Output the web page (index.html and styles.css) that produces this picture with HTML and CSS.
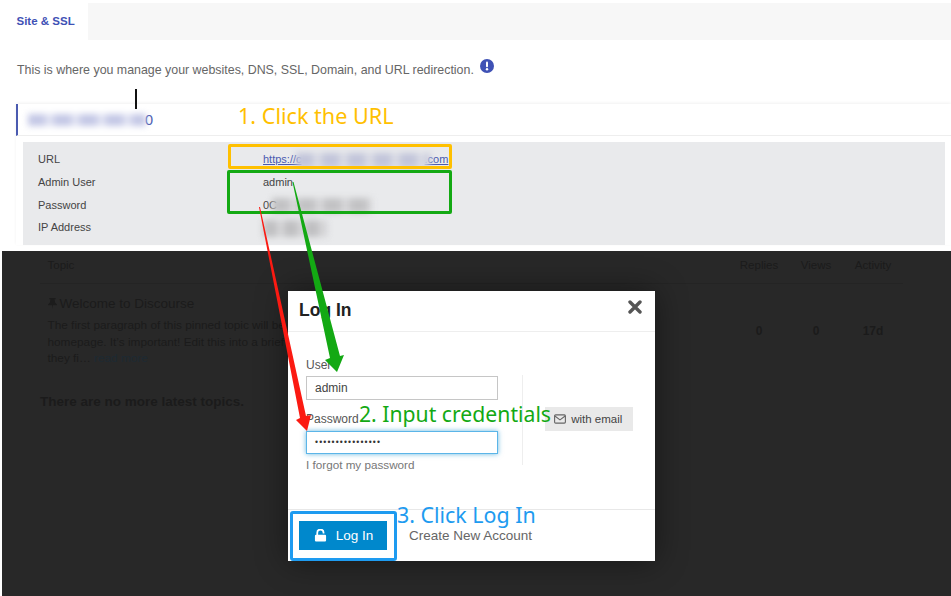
FILE: index.html
```html
<!DOCTYPE html>
<html lang="en">
<head>
<meta charset="utf-8">
<title>Site &amp; SSL</title>
<link rel="stylesheet" href="styles.css">
</head>
<body>
<div class="shot">
  <section class="top">
    <div class="tabs"><div class="tab">Site &amp; SSL</div></div>
    <p class="intro">This is where you manage your websites, DNS, SSL, Domain, and URL redirection.
      <svg class="info" viewBox="0 0 14 14" width="14" height="14"><circle cx="7" cy="7" r="7" fill="#3f51b5"/><rect x="6" y="2.6" width="2" height="5.6" rx="1" fill="#fff"/><circle cx="7" cy="10.3" r="1.2" fill="#fff"/></svg>
    </p>
    <div class="card">
      <div class="card-head"><span class="blur blur-title"></span><span class="site-end">0</span></div>
      <div class="details">
        <div class="row"><span>URL</span><span><a class="link">https://c<span class="blur blur-url"></span>.com</a></span></div>
        <div class="row"><span>Admin User</span><span>admin</span></div>
        <div class="row"><span>Password</span><span>0C<span class="blur blur-pass"></span></span></div>
        <div class="row"><span>IP Address</span><span><span class="blur blur-ip"></span></span></div>
      </div>
    </div>
  </section>

  <section class="dark">
    <div class="topics-head"><span class="col-topic">Topic</span><span class="col-num">Replies</span><span class="col-num">Views</span><span class="col-num">Activity</span></div>
    <div class="topic-row">
      <div class="col-topic topic-main">
        <div class="topic-title"><svg class="pin" viewBox="0 0 10 12" width="9" height="11"><path d="M1.500 0h7v1.200H7.300L7.800 5 10 7v1H5.500L5 12l-.5-4H0V7l2.200-2 .5-3.800H1.500z" fill="#1c1c1c"/></svg>Welcome to Discourse</div>
        <p class="excerpt">The first paragraph of this pinned topic will be visible as a welcome message to new visitors on your<br>homepage. It’s important! Edit this into a brief description of your community: who it’s for, what<br>they fi… <span class="more">read more</span></p>
      </div>
      <span class="col-num strong">0</span><span class="col-num strong">0</span><span class="col-num strong">17d</span>
    </div>
    <p class="no-more">There are no more latest topics.</p>
  </section>

  <div class="modal">
    <header class="modal-head"><h2>Log In</h2>
      <svg class="close" viewBox="0 0 14 14" width="14" height="14"><path d="M2 2l10 10M12 2L2 12" stroke="#555" stroke-width="3.400" stroke-linecap="round" fill="none"/></svg>
    </header>
    <div class="modal-body">
      <div class="form">
        <label class="lbl lbl-user">User</label>
        <div class="input">admin</div>
        <label class="lbl lbl-pass">Password</label>
        <div class="input focus">••••••••••••••••</div>
        <div class="forgot">I forgot my password</div>
      </div>
      <div class="alt">
        <div class="email-btn">
          <svg viewBox="0 0 14 11" width="12" height="10"><rect x=".7" y=".7" width="12.600" height="9.600" rx="1.200" fill="none" stroke="#666" stroke-width="1.300"/><path d="M1 2l6 4.500L13 2" fill="none" stroke="#666" stroke-width="1.300"/></svg>
          with email</div>
      </div>
    </div>
    <footer class="modal-foot">
      <div class="login-btn">
        <svg viewBox="0 0 14 14" width="13" height="13"><path d="M3.500 6.500V4a3.400 3.400 0 0 1 6.800 0v.8" fill="none" stroke="#fff" stroke-width="1.900"/><rect x="1" y="6.300" width="12" height="7.200" rx="1.200" fill="#fff"/></svg>
        Log In</div>
      <span class="create">Create New Account</span>
    </footer>
  </div>

  <span class="tick"></span>
  <span class="box box-yellow"></span>
  <span class="box box-green"></span>
  <span class="box box-blue"></span>
  <svg class="arrows" viewBox="0 0 951 596" width="951" height="596">
    <polygon fill="#13a913" points="292.500,182 293.500,182 340,356 344,355 337,372 325,360 330,358"/>
    <polygon fill="#fb1a12" points="259,207 260,207 306,416 311,415 307,431 296,420 300,418"/>
  </svg>
  <span class="note note-1">1. Click the URL</span>
  <span class="note note-2">2. Input credentials</span>
  <span class="note note-3">3. Click Log In</span>
</div>
</body>
</html>
```
FILE: styles.css
```css
* { box-sizing: border-box; }
html, body { margin: 0; padding: 0; background: #fff; }
body { font-family: "Liberation Sans", Arial, sans-serif; overflow: hidden; }
.shot { position: relative; width: 951px; height: 596px; display: flex; flex-direction: column; overflow: hidden; }

.top { height: 251px; padding-top: 3px; background: #fff; flex: none; }
.tabs { height: 37px; margin-left: 5px; background: #f7f7f7; }
.tab { width: 83px; height: 37px; background: #fff; color: #3f51b5; font-size: 11.500px; font-weight: bold; line-height: 36px; padding-left: 11.500px; }
.intro { margin: 0; height: 64px; padding: 19px 0 0 17px; font-size: 12.400px; line-height: 16px; color: #666; white-space: nowrap; }
.info { vertical-align: 1px; margin-left: 3px; }

.card { margin-left: 16px; box-shadow: 0 -1px 3px rgba(0,0,0,.06); }
.card-head { height: 32px; border-left: 2px solid #4a5ab0; border-bottom: 1px solid #eee; display: flex; align-items: center; padding-left: 10px; padding-top: 1px; }
.site-end { color: #4a5ab0; font-size: 14.500px; margin-left: -1px; }
.details { margin: 6px 6px 0 7px; height: 103px; padding: 6.300px 0 0 15px; background: #e9eaec; }
.row { display: grid; grid-template-columns: 225px 1fr; height: 22.700px; line-height: 22.700px; font-size: 11px; color: #444; white-space: nowrap; }
.link { color: #4a5ab0; text-decoration: underline; }

.blur { display: inline-block; vertical-align: middle; filter: blur(3px); }
.blur-title { width: 118px; height: 12px; background: repeating-linear-gradient(90deg, #c4c8e6 0 17px, #dfe1f2 17px 26px); }
.blur-url { width: 134px; height: 15px; margin: 0 -5px 0 -6px; background: repeating-linear-gradient(90deg, #c2c5da 0 17px, #d8dae4 17px 26px); }
.blur-pass { width: 100px; height: 15px; margin-left: -5px; background: repeating-linear-gradient(90deg, #c2c2c4 0 17px, #d5d5d7 17px 26px); }
.blur-ip { width: 64px; height: 17px; background: repeating-linear-gradient(90deg, #c0c0c2 0 14px, #d6d6d8 14px 21px); }

.dark { flex: 1; margin-left: 2px; background: #282828; color: #1b1b1b; padding: 0 48px 0 38px; }
.topics-head { display: flex; height: 33px; align-items: flex-start; padding: 7px 1.500px 0 7.500px; line-height: 14px; font-size: 11.500px; border-bottom: 1px solid #242424; }
.col-topic { flex: 1; min-width: 0; }
.col-num { width: 57px; text-align: center; font-size: 11.500px; flex: none; }
.col-num.strong { font-weight: bold; font-size: 12px; }
.topic-row { display: flex; align-items: center; padding: 0 1.500px 0 7.500px; height: 94px; }
.topic-main { align-self: flex-start; padding-top: 11px; }
.topic-title { font-size: 13.500px; line-height: 18px; white-space: nowrap; }
.pin { margin-right: 3px; vertical-align: -1px; }
.excerpt { margin: 4px 0 0; font-size: 11.800px; line-height: 16.500px; white-space: nowrap; }
.more { color: #1d2a33; }
.no-more { margin: 15px 0 0; font-size: 13.500px; font-weight: bold; line-height: 18px; }

.modal { position: absolute; left: 288px; top: 291px; width: 367px; height: 270px; background: #fff; display: flex; flex-direction: column; box-shadow: 0 0 30px rgba(0,0,0,.45); color: #555; }
.modal-head { height: 41px; padding: 9px 0 0 11px; border-bottom: 1px solid #eee; position: relative; flex: none; }
.modal-head h2 { margin: 0; font-size: 17.500px; line-height: 20px; color: #222; }
.close { position: absolute; right: 13px; top: 9px; }
.modal-body { flex: 1; display: flex; padding: 26px 0 0 18px; align-items: flex-start; }
.form { width: 216px; flex: none; }
.lbl { display: block; font-size: 12px; line-height: 14px; color: #555; }
.lbl-user { height: 18px; }
.lbl-pass { margin-top: 12px; height: 19px; }
.input { width: 192px; height: 24px; border: 1px solid #c6c6c6; font-size: 12px; line-height: 22px; padding-left: 8px; color: #444; }
.input.focus { border: 1px solid #5bb5e8; box-shadow: 0 0 5px rgba(0,136,204,.6); height: 23px; line-height: 21px; padding-left: 8px; letter-spacing: 1.150px; font-size: 8.500px; color: #333; }
.forgot { margin-top: 4px; font-size: 11.700px; line-height: 14px; color: #777; white-space: nowrap; }
.alt { margin-top: 17px; height: 90px; border-left: 1px solid #eee; padding: 32px 0 0 22px; }
.email-btn { width: 88px; height: 24px; background: #e9e9e9; font-size: 11.500px; line-height: 24px; padding-left: 9px; color: #444; white-space: nowrap; }
.email-btn svg { vertical-align: -1px; margin-right: 2px; }
.modal-foot { height: 52px; border-top: 1px solid #e8e8e8; padding: 11px 0 0 11px; display: flex; align-items: flex-start; flex: none; }
.login-btn { width: 88px; height: 29px; background: #0088cc; color: #fff; font-size: 13.500px; line-height: 29px; padding-left: 15px; white-space: nowrap; }
.login-btn svg { vertical-align: -2px; margin-right: 5px; }
.create { margin-left: 22px; font-size: 13.500px; line-height: 29px; color: #666; white-space: nowrap; }

.tick { position: absolute; left: 135px; top: 89px; width: 2px; height: 20px; background: #111; }
.box { position: absolute; border-radius: 2px; border-style: solid; }
.box-yellow { left: 228px; top: 144px; width: 224px; height: 25px; border: 3px solid #ffc000; }
.box-green { left: 227px; top: 170px; width: 225px; height: 44px; border: 3px solid #13a913; }
.box-blue { left: 290px; top: 511px; width: 107px; height: 50px; border: 3px solid #1e9bf0; border-radius: 3px; }
.arrows { position: absolute; left: 0; top: 0; pointer-events: none; }
.note { position: absolute; font-family: "Noto Sans", sans-serif; line-height: 28px; white-space: nowrap; }
.note-1 { left: 238px; top: 102px; font-size: 21.600px; color: #ffc000; }
.note-2 { left: 359px; top: 400px; font-size: 21.200px; color: #13a913; }
.note-3 { left: 397px; top: 501px; font-size: 21.400px; color: #1e9bf0; }
```
